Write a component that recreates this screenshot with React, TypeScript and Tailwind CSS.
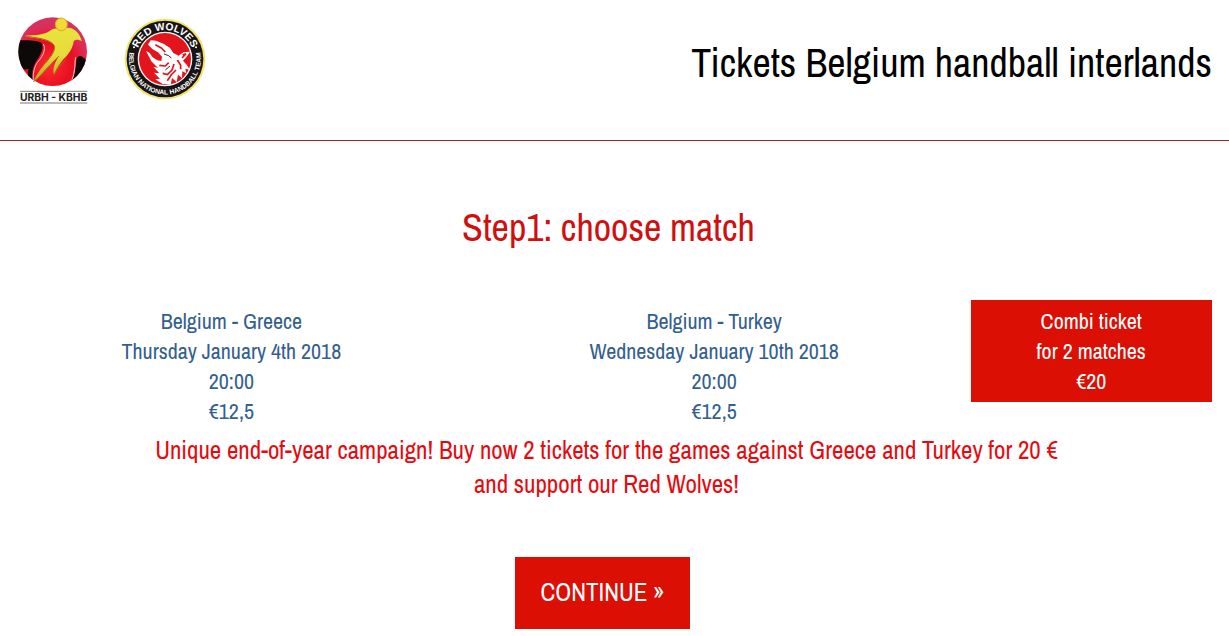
import { useState } from "react";

const matches = [
  { id: "greece", title: "Belgium - Greece", date: "Thursday January 4th 2018", time: "20:00", price: "€12,5" },
  { id: "turkey", title: "Belgium - Turkey", date: "Wednesday January 10th 2018", time: "20:00", price: "€12,5" },
];

function FederationLogo() {
  return (
    <svg className="w-[72px] h-[90px]" viewBox="51 48 216 270" role="img" aria-label="URBH - KBHB">
      <defs>
        <radialGradient id="ball" cx="0.45" cy="0.7" r="0.75">
          <stop offset="0" stopColor="#ff2a30" />
          <stop offset="0.45" stopColor="#e80e20" />
          <stop offset="0.75" stopColor="#de2c58" />
          <stop offset="1" stopColor="#c93a68" />
        </radialGradient>
        <linearGradient id="player" x1="0" y1="0" x2="0" y2="1">
          <stop offset="0" stopColor="#e9e23e" />
          <stop offset="0.5" stopColor="#e6dc3a" />
          <stop offset="1" stopColor="#b9a41c" />
        </linearGradient>
        <clipPath id="ballClip">
          <circle cx="158" cy="155" r="103" />
        </clipPath>
      </defs>
      <circle cx="158" cy="155" r="103" fill="url(#ball)" />
      <g clipPath="url(#ballClip)">
        <path d="M50 121 C80 120 108 121 124 128 C134 144 122 165 110 182 C100 198 92 218 100 246 C86 240 80 222 86 206 C74 212 62 206 50 196Z" fill="#0d0909" />
        <path d="M265 190 C250 166 234 160 229 180 C228 205 224 228 210 254 L240 258 L270 200Z" fill="#0d0909" />
        <path d="M130 132 C140 150 126 172 110 190 C102 205 97 226 101 246" fill="none" stroke="#f6c5c5" strokeWidth="3" />
        <path d="M227 172 C223 190 228 212 213 248" fill="none" stroke="#f6c5c5" strokeWidth="3" />
      </g>
      <path d="M74 107 C105 105 132 105 150 92 C160 84 185 82 211 84 C230 90 240 104 246 124 C236 118 226 118 221 124 C219 142 208 162 190 178 C178 192 170 206 162 224 C157 206 164 190 176 169 C160 188 144 200 130 216 C120 227 112 237 100 245 C110 224 122 206 136 190 C154 168 166 152 162 136 C154 124 132 118 108 114 C96 111 84 112 74 107Z" fill="url(#player)" />
      <path d="M74 107 C100 114 150 114 163 137 C167 154 152 170 136 190 M100 245 C120 234 136 208 176 169 M162 224 C172 205 182 194 196 180" fill="none" stroke="#a66a18" strokeWidth="3" />
      <ellipse cx="184" cy="73" rx="18" ry="19" fill="#f1dc36" stroke="#dba52c" strokeWidth="3" />
      <path d="M60 274H262M60 309H262" stroke="#777" strokeWidth="3" />
      <text x="161" y="302" textAnchor="middle" className="font-[Inter] text-[31px] font-bold" fill="#222">URBH - KBHB</text>
    </svg>
  );
}

function WolvesLogo() {
  return (
    <svg className="mt-0.5 w-[82px] h-[82px]" viewBox="26 38 246 246" role="img" aria-label="Red Wolves">
      <circle cx="149" cy="161" r="121" fill="#eee467" />
      <circle cx="149" cy="161" r="115" fill="#181416" />
      <circle cx="149" cy="161" r="82" fill="#fff" />
      <circle cx="149" cy="161" r="78" fill="#e4141c" />
      {/* howling wolf, muzzle up left */}
      <path d="M98 118 L106 105 L122 106 L146 116 L164 128 L174 143 L190 151 L204 141 L224 139 L214 154 L203 166 L214 178 L224 194 L210 190 L213 204 L201 198 L200 218 L188 208 L184 230 L170 218 L166 238 L142 236 L120 222 L134 220 L116 202 L132 204 L114 184 L128 188 L108 168 L92 137 L102 142 L112 156 L126 165 L138 167 L140 154 L128 141 L112 132Z" fill="#fff" />
      <path d="M120 118 L138 128 L150 140 M132 180 L150 182 L160 172 M142 204 L156 208 L170 194 L176 176 M156 226 L168 208 L182 194 M186 164 L196 180 L196 192 M202 149 L212 145 L200 158" fill="none" stroke="#e4141c" strokeWidth="5" />
      <path d="M146 146 L160 151 L168 158 M150 194 L164 182" fill="none" stroke="#6b1418" strokeWidth="3" />
      <path id="wolvesTop" d="M62 161 A87 87 0 0 1 236 161" fill="none" />
      <path id="wolvesBottom" d="M48 121 A108 108 0 1 0 250 121" fill="none" />
      <text className="font-['Liberation_Sans'] text-[31px] font-bold" fill="#fff" textAnchor="middle">
        <textPath href="#wolvesTop" startOffset="50%">RED WOLVES</textPath>
      </text>
      <text className="font-['Liberation_Sans'] text-[20px] font-bold" fill="#fff" textAnchor="middle">
        <textPath href="#wolvesBottom" startOffset="50%">BELGIAN NATIONAL HANDBALL TEAM</textPath>
      </text>
      <circle cx="56" cy="126" r="3" fill="#fff" />
      <circle cx="242" cy="126" r="3" fill="#fff" />
    </svg>
  );
}

export default function App() {
  const [selected, setSelected] = useState("combi");

  return (
    <div className="min-h-screen bg-white font-['Archivo_Narrow','Liberation_Sans_Narrow','Roboto_Condensed','Liberation_Sans',sans-serif]">
      <header className="flex items-start justify-between border-b border-[#a82222] px-[17px] pt-4 pb-[34px]">
        <div className="flex gap-[35px]">
          <FederationLogo />
          <WolvesLogo />
        </div>
        <h1 className="pt-6 text-[40px] leading-[46px] text-black">Tickets Belgium handball interlands</h1>
      </header>

      <main className="pt-16 pr-[17px] pl-[5px] text-center">
        <h2 className="text-[38px] leading-[46px] text-[#d01010]">Step1: choose match</h2>

        <div className="mt-[49px] grid grid-cols-[15fr_15fr_8fr] items-start gap-x-[30px] text-[22px] leading-[30px]">
          {matches.map((m) => (
            <button
              key={m.id}
              onClick={() => setSelected(m.id)}
              aria-pressed={selected === m.id}
              className="cursor-pointer py-1.5 text-[#33608f]"
            >
              <span className="block">{m.title}</span>
              <span className="block">{m.date}</span>
              <span className="block">{m.time}</span>
              <span className="block">{m.price}</span>
            </button>
          ))}
          <button
            onClick={() => setSelected("combi")}
            aria-pressed={selected === "combi"}
            className="cursor-pointer bg-[#dc0f05] py-1.5 text-white"
          >
            <span className="block">Combi ticket</span>
            <span className="block">for 2 matches</span>
            <span className="block">€20</span>
          </button>
        </div>

        <p className="mt-px pr-1 text-[25px] leading-[34px] text-[#e60a0f]">
          Unique end-of-year campaign! Buy now 2 tickets for the games against Greece and Turkey for 20 €
          <br />
          and support our Red Wolves!
        </p>

        <div className="mt-14 pr-3">
          <button className="h-[72px] cursor-pointer bg-[#dc0f05] px-[25px] text-[25px] text-white">CONTINUE »</button>
        </div>
      </main>
    </div>
  );
}
